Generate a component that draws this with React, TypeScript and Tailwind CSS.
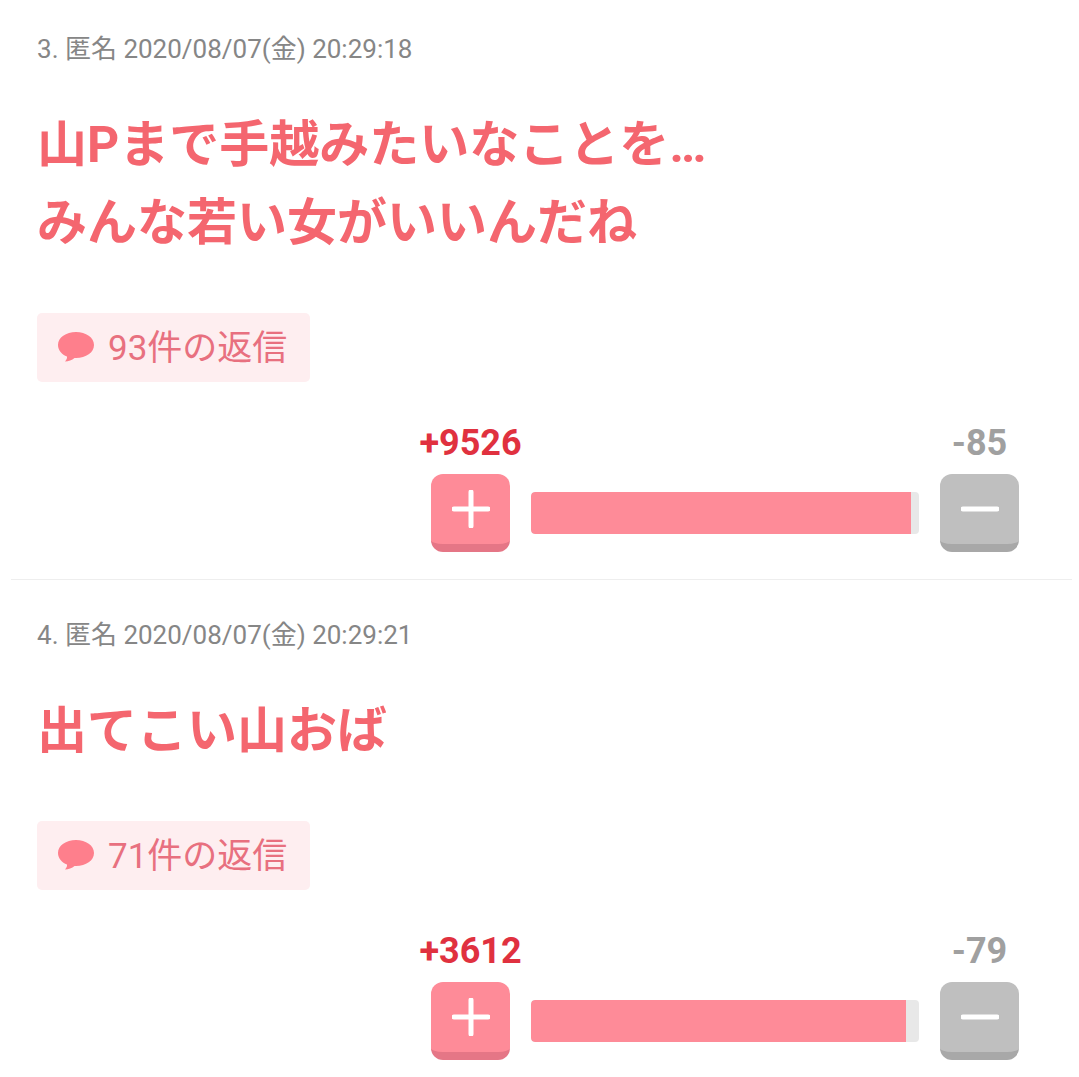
const FONT = "font-['Roboto','Noto_Sans_CJK_JP',sans-serif]";

interface Comment {
  no: number;
  date: string;
  lines: string[];
  replies: number;
  plus: number;
  minus: number;
  ratio: number;
}

const COMMENTS: Comment[] = [
  { no: 3, date: "2020/08/07(金) 20:29:18", lines: ["山Pまで手越みたいなことを…", "みんな若い女がいいんだね"], replies: 93, plus: 9526, minus: 85, ratio: 380 },
  { no: 4, date: "2020/08/07(金) 20:29:21", lines: ["出てこい山おば"], replies: 71, plus: 3612, minus: 79, ratio: 375 },
];

function Bubble() {
  return (
    <svg width="38" height="32" viewBox="0 0 38 32">
      <path d="M19 0C9 0 1 5.500 1 13c0 5.500 4 9.500 9 11.500.4 1.500-.6 3.500-2 5 3.500 0 7-1.500 9.500-3.500h1.500c10 0 18-5.500 18-13S29 0 19 0z" fill="#fe7f8c" />
    </svg>
  );
}

function CommentRow({ c }: { c: Comment }) {
  return (
    <div className="flex flex-col">
      <div className="px-[37px] text-[26px] leading-[30px] text-[#868686]">
        {c.no}. 匿名 {c.date}
      </div>
      <div className="mt-[42px] px-[37px] text-[50px] leading-[78px] font-bold text-[#f4666f] whitespace-nowrap">
        {c.lines.map((l) => (
          <div key={l}>{l}</div>
        ))}
      </div>
      <div className="mt-[51px] ml-[37px] flex h-[69px] w-[273px] items-center gap-[13px] rounded-[5px] bg-[#feeef0] pl-[20px]">
        <Bubble />
        <span className="pt-[3px] text-[35px] text-[#e8707f]">{c.replies}件の返信</span>
      </div>
      <div className="mt-[43px] flex justify-end pr-[60px]">
        <div className="mr-[21px] flex w-[79px] flex-col items-center">
          <span className="text-[36px] leading-[36px] font-bold whitespace-nowrap text-[#e0313f]">+{c.plus}</span>
          <div className="mt-[13px] flex h-[78px] w-[79px] items-center justify-center rounded-[12px] border-b-[8px] border-[#e57686] bg-[#fe8b98]">
            <svg width="38" height="38" viewBox="0 0 38 38"><path d="M19 2v34M2 19h34" stroke="#fff" strokeWidth="5" strokeLinecap="round" /></svg>
          </div>
        </div>
        <div className="mt-[67px] h-[42px] w-[388px] overflow-hidden rounded-[4px] bg-[#e8e8e8]">
          <div className="h-full rounded-l-[4px] bg-[#fe8b98]" style={{ width: c.ratio }} />
        </div>
        <div className="ml-[21px] flex w-[79px] flex-col items-center">
          <span className="text-[36px] leading-[36px] font-bold text-[#a0a0a0]">-{c.minus}</span>
          <div className="mt-[13px] flex h-[78px] w-[79px] items-center justify-center rounded-[12px] border-b-[8px] border-[#a8a8a8] bg-[#bfbfbf]">
            <svg width="38" height="6" viewBox="0 0 38 6"><path d="M2 3h34" stroke="#fff" strokeWidth="5" strokeLinecap="round" /></svg>
          </div>
        </div>
      </div>
    </div>
  );
}

export default function App() {
  return (
    <div className={`${FONT} h-[1077px] w-[1079px] overflow-hidden bg-white pt-[34px]`}>
      <CommentRow c={COMMENTS[0]} />
      <div className="ml-[11px] mr-[7px] mt-[27px] mb-[40px] h-px bg-[#eeeeee]" />
      <CommentRow c={COMMENTS[1]} />
    </div>
  );
}
